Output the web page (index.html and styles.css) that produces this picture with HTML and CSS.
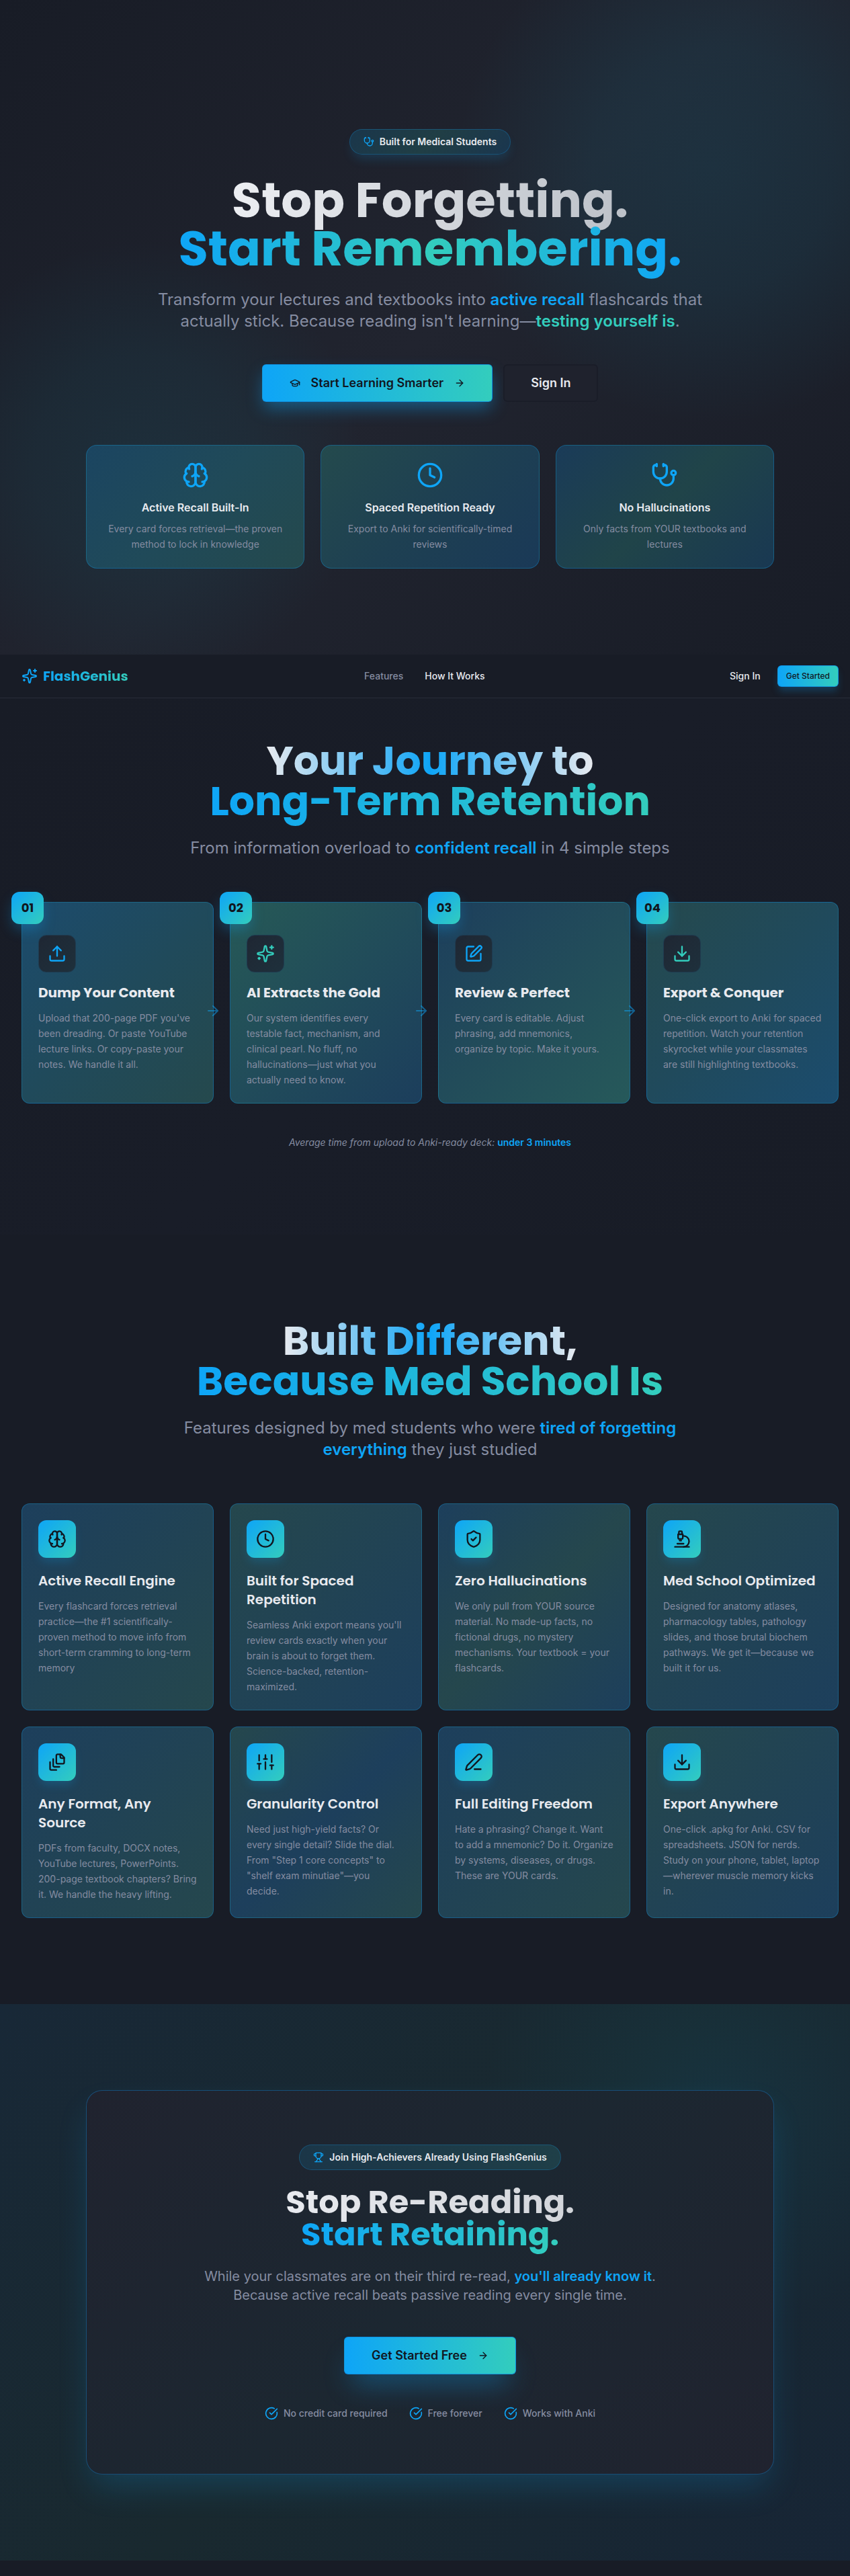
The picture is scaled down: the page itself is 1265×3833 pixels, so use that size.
FILE: index.html
```html
<!DOCTYPE html>
<html lang="en">
<head>
<meta charset="utf-8">
<meta name="viewport" content="width=device-width, initial-scale=1">
<title>FlashGenius</title>
<link rel="stylesheet" href="styles.css">
</head>
<body>
<svg class="sprite" aria-hidden="true">
  <symbol id="stethoscope" viewBox="0 0 24 24"><path d="M11 2v2"/><path d="M5 2v2"/><path d="M5 3H4a2 2 0 0 0-2 2v4a6 6 0 0 0 12 0V5a2 2 0 0 0-2-2h-1"/><path d="M8 15a6 6 0 0 0 12 0v-3"/><circle cx="20" cy="10" r="2"/></symbol>
  <symbol id="graduation" viewBox="0 0 24 24"><path d="M21.42 10.922a1 1 0 0 0-.019-1.838L12.83 5.18a2 2 0 0 0-1.66 0L2.6 9.08a1 1 0 0 0 0 1.832l8.57 3.908a2 2 0 0 0 1.66 0z"/><path d="M22 10v6"/><path d="M6 12.5V16a6 3 0 0 0 12 0v-3.5"/></symbol>
  <symbol id="arrow" viewBox="0 0 24 24"><path d="M5 12h14"/><path d="m12 5 7 7-7 7"/></symbol>
  <symbol id="brain" viewBox="0 0 24 24"><path d="M12 5a3 3 0 1 0-5.997.125 4 4 0 0 0-2.526 5.77 4 4 0 0 0 .556 6.588A4 4 0 1 0 12 18Z"/><path d="M12 5a3 3 0 1 1 5.997.125 4 4 0 0 1 2.526 5.77 4 4 0 0 1-.556 6.588A4 4 0 1 1 12 18Z"/><path d="M15 13a4.5 4.5 0 0 1-3-4 4.5 4.5 0 0 1-3 4"/><path d="M17.599 6.5a3 3 0 0 0 .399-1.375"/><path d="M6.003 5.125A3 3 0 0 0 6.401 6.5"/><path d="M3.477 10.896a4 4 0 0 1 .585-.396"/><path d="M19.938 10.5a4 4 0 0 1 .585.396"/><path d="M6 18a4 4 0 0 1-1.967-.516"/><path d="M19.967 17.484A4 4 0 0 1 18 18"/></symbol>
  <symbol id="clock" viewBox="0 0 24 24"><circle cx="12" cy="12" r="10"/><path d="M12 6v6l4 2"/></symbol>
  <symbol id="sparkles" viewBox="0 0 24 24"><path d="M11.017 2.814a1 1 0 0 1 1.966 0l1.051 5.558a2 2 0 0 0 1.594 1.594l5.558 1.051a1 1 0 0 1 0 1.966l-5.558 1.051a2 2 0 0 0-1.594 1.594l-1.051 5.558a1 1 0 0 1-1.966 0l-1.051-5.558a2 2 0 0 0-1.594-1.594l-5.558-1.051a1 1 0 0 1 0-1.966l5.558-1.051a2 2 0 0 0 1.594-1.594z"/><path d="M20 2v4"/><path d="M22 4h-4"/><path d="M4 17v2"/><path d="M5 18H3"/></symbol>
  <symbol id="upload" viewBox="0 0 24 24"><path d="M12 3v12"/><path d="m17 8-5-5-5 5"/><path d="M21 15v4a2 2 0 0 1-2 2H5a2 2 0 0 1-2-2v-4"/></symbol>
  <symbol id="download" viewBox="0 0 24 24"><path d="M12 15V3"/><path d="M21 15v4a2 2 0 0 1-2 2H5a2 2 0 0 1-2-2v-4"/><path d="m7 10 5 5 5-5"/></symbol>
  <symbol id="edit" viewBox="0 0 24 24"><path d="M12 3H5a2 2 0 0 0-2 2v14a2 2 0 0 0 2 2h14a2 2 0 0 0 2-2v-7"/><path d="M18.375 2.625a1 1 0 0 1 3 3l-9.013 9.014a2 2 0 0 1-.853.505l-2.873.84a.5.5 0 0 1-.62-.62l.84-2.873a2 2 0 0 1 .506-.852z"/></symbol>
  <symbol id="shield" viewBox="0 0 24 24"><path d="M20 13c0 5-3.5 7.5-7.66 8.95a1 1 0 0 1-.67-.01C7.5 20.5 4 18 4 13V6a1 1 0 0 1 1-1c2 0 4.5-1.2 6.24-2.72a1.17 1.17 0 0 1 1.52 0C14.51 3.81 17 5 19 5a1 1 0 0 1 1 1z"/><path d="m9 12 2 2 4-4"/></symbol>
  <symbol id="microscope" viewBox="0 0 24 24"><path d="M6 18h8"/><path d="M3 22h18"/><path d="M14 22a7 7 0 1 0 0-14h-1"/><path d="M9 14h2"/><path d="M9 12a2 2 0 0 1-2-2V6h6v4a2 2 0 0 1-2 2Z"/><path d="M12 6V3a1 1 0 0 0-1-1H9a1 1 0 0 0-1 1v3"/></symbol>
  <symbol id="files" viewBox="0 0 24 24"><path d="M21 7h-3a2 2 0 0 1-2-2V2"/><path d="M21 6v6.5c0 .8-.7 1.5-1.5 1.5h-7c-.8 0-1.5-.7-1.5-1.5v-9c0-.8.7-1.5 1.5-1.5H17Z"/><path d="M7 8v8.8c0 .3.2.6.4.8.2.2.5.4.8.4H15"/><path d="M3 12v8.8c0 .3.2.6.4.8.2.2.5.4.8.4H11"/></symbol>
  <symbol id="sliders" viewBox="0 0 24 24"><path d="M4 21v-7"/><path d="M4 10V3"/><path d="M12 21v-9"/><path d="M12 8V3"/><path d="M20 21v-5"/><path d="M20 12V3"/><path d="M2 14h4"/><path d="M10 8h4"/><path d="M18 16h4"/></symbol>
  <symbol id="pen" viewBox="0 0 24 24"><path d="M13 21h8"/><path d="M21.174 6.812a1 1 0 0 0-3.986-3.987L3.842 16.174a2 2 0 0 0-.5.83l-1.321 4.352a.5.5 0 0 0 .623.622l4.353-1.32a2 2 0 0 0 .83-.497z"/></symbol>
  <symbol id="trophy" viewBox="0 0 24 24"><path d="M6 9H4.5a2.5 2.5 0 0 1 0-5H6"/><path d="M18 9h1.5a2.5 2.5 0 0 0 0-5H18"/><path d="M4 22h16"/><path d="M10 14.66V17c0 .55-.47.98-.97 1.21C7.85 18.75 7 20.24 7 22"/><path d="M14 14.66V17c0 .55.47.98.97 1.21C16.15 18.75 17 20.24 17 22"/><path d="M18 2H6v7a6 6 0 0 0 12 0V2Z"/></symbol>
  <symbol id="check" viewBox="0 0 24 24"><path d="M21.801 10A10 10 0 1 1 17 3.335"/><path d="m9 11 3 3L22 4"/></symbol>
</svg>

<div class="page">
  <section class="hero">
    <p class="pill pill-hero"><svg class="icon"><use href="#stethoscope"/></svg>Built for Medical Students</p>
    <h1 class="display"><span class="fade">Stop Forgetting.</span><br><span class="wave">Start Remembering.</span></h1>
    <p class="lead">Transform your lectures and textbooks into <strong>active recall</strong> flashcards that actually stick. Because reading isn't learning—<strong class="teal">testing yourself is</strong>.</p>
    <div class="actions">
      <button class="btn btn-primary" type="button"><svg class="icon"><use href="#graduation"/></svg>Start Learning Smarter<svg class="icon"><use href="#arrow"/></svg></button>
      <button class="btn btn-quiet" type="button">Sign In</button>
    </div>
    <ul class="perks">
      <li class="perk tint-a"><svg class="icon icon-xl"><use href="#brain"/></svg><h3>Active Recall Built-In</h3><p>Every card forces retrieval—the proven method to lock in knowledge</p></li>
      <li class="perk tint-b"><svg class="icon icon-xl"><use href="#clock"/></svg><h3>Spaced Repetition Ready</h3><p>Export to Anki for scientifically-timed reviews</p></li>
      <li class="perk tint-c"><svg class="icon icon-xl"><use href="#stethoscope"/></svg><h3>No Hallucinations</h3><p>Only facts from YOUR textbooks and lectures</p></li>
    </ul>
  </section>

  <header class="nav">
    <a class="brand" href="#"><svg class="icon icon-md"><use href="#sparkles"/></svg><span>FlashGenius</span></a>
    <nav class="links"><a class="dim" href="#features">Features</a><a href="#how">How It Works</a></nav>
    <div class="account"><button class="btn-text" type="button">Sign In</button><button class="btn-small" type="button">Get Started</button></div>
  </header>

  <section class="how" id="how">
    <h2 class="title"><span class="shine">Your Journey to</span><br><span class="flow">Long-Term Retention</span></h2>
    <p class="lead">From information overload to <strong>confident recall</strong> in 4 simple steps</p>
    <ol class="grid steps">
      <li class="card step step-a"><span class="number">01</span><span class="tile"><svg class="icon icon-lg"><use href="#upload"/></svg></span><h3>Dump Your Content</h3><p>Upload that 200-page PDF you've been dreading. Or paste YouTube lecture links. Or copy-paste your notes. We handle it all.</p><svg class="icon next"><use href="#arrow"/></svg></li>
      <li class="card step step-b"><span class="number">02</span><span class="tile tile-teal"><svg class="icon icon-lg"><use href="#sparkles"/></svg></span><h3>AI Extracts the Gold</h3><p>Our system identifies every testable fact, mechanism, and clinical pearl. No fluff, no hallucinations—just what you actually need to know.</p><svg class="icon next"><use href="#arrow"/></svg></li>
      <li class="card step step-c"><span class="number">03</span><span class="tile"><svg class="icon icon-lg"><use href="#edit"/></svg></span><h3>Review &amp; Perfect</h3><p>Every card is editable. Adjust phrasing, add mnemonics, organize by topic. Make it yours.</p><svg class="icon next"><use href="#arrow"/></svg></li>
      <li class="card step step-d"><span class="number">04</span><span class="tile tile-teal"><svg class="icon icon-lg"><use href="#download"/></svg></span><h3>Export &amp; Conquer</h3><p>One-click export to Anki for spaced repetition. Watch your retention skyrocket while your classmates are still highlighting textbooks.</p></li>
    </ol>
    <p class="note">Average time from upload to Anki-ready deck: <strong>under 3 minutes</strong></p>
  </section>

  <section class="features" id="features">
    <h2 class="title"><span class="shine">Built Different,</span><br><span class="flow">Because Med School Is</span></h2>
    <p class="lead lead-narrow">Features designed by med students who were <strong>tired of forgetting everything</strong> they just studied</p>
    <ul class="grid">
      <li class="card feature blue-teal"><span class="badge"><svg class="icon icon-lg"><use href="#brain"/></svg></span><h3>Active Recall Engine</h3><p>Every flashcard forces retrieval practice—the #1 scientifically-proven method to move info from short-term cramming to long-term memory</p></li>
      <li class="card feature teal-blue"><span class="badge"><svg class="icon icon-lg"><use href="#clock"/></svg></span><h3>Built for Spaced Repetition</h3><p>Seamless Anki export means you'll review cards exactly when your brain is about to forget them. Science-backed, retention-maximized.</p></li>
      <li class="card feature blue-teal-blue"><span class="badge"><svg class="icon icon-lg"><use href="#shield"/></svg></span><h3>Zero Hallucinations</h3><p>We only pull from YOUR source material. No made-up facts, no fictional drugs, no mystery mechanisms. Your textbook = your flashcards.</p></li>
      <li class="card feature teal-blue"><span class="badge"><svg class="icon icon-lg"><use href="#microscope"/></svg></span><h3>Med School Optimized</h3><p>Designed for anatomy atlases, pharmacology tables, pathology slides, and those brutal biochem pathways. We get it—because we built it for us.</p></li>
      <li class="card feature blue-teal"><span class="badge"><svg class="icon icon-lg"><use href="#files"/></svg></span><h3>Any Format, Any Source</h3><p>PDFs from faculty, DOCX notes, YouTube lectures, PowerPoints. 200-page textbook chapters? Bring it. We handle the heavy lifting.</p></li>
      <li class="card feature teal-blue-teal"><span class="badge"><svg class="icon icon-lg"><use href="#sliders"/></svg></span><h3>Granularity Control</h3><p>Need just high-yield facts? Or every single detail? Slide the dial. From "Step 1 core concepts" to "shelf exam minutiae"—you decide.</p></li>
      <li class="card feature blue-teal"><span class="badge"><svg class="icon icon-lg"><use href="#pen"/></svg></span><h3>Full Editing Freedom</h3><p>Hate a phrasing? Change it. Want to add a mnemonic? Do it. Organize by systems, diseases, or drugs. These are YOUR cards.</p></li>
      <li class="card feature teal-blue"><span class="badge"><svg class="icon icon-lg"><use href="#download"/></svg></span><h3>Export Anywhere</h3><p>One-click .apkg for Anki. CSV for spreadsheets. JSON for nerds. Study on your phone, tablet, laptop—wherever muscle memory kicks in.</p></li>
    </ul>
  </section>

  <section class="cta">
    <div class="panel">
      <p class="pill"><svg class="icon"><use href="#trophy"/></svg>Join High-Achievers Already Using FlashGenius</p>
      <h2 class="subtitle"><span class="fade-soft">Stop Re-Reading.</span><br><span class="flow">Start Retaining.</span></h2>
      <p class="pitch">While your classmates are on their third re-read, <strong>you'll already know it</strong>. Because active recall beats passive reading every single time.</p>
      <button class="btn btn-primary btn-glow" type="button">Get Started Free<svg class="icon"><use href="#arrow"/></svg></button>
      <ul class="checks">
        <li><svg class="icon icon-sm"><use href="#check"/></svg>No credit card required</li>
        <li><svg class="icon icon-sm"><use href="#check"/></svg>Free forever</li>
        <li><svg class="icon icon-sm"><use href="#check"/></svg>Works with Anki</li>
      </ul>
    </div>
  </section>
</div>
</body>
</html>
```
FILE: styles.css
```css
:root {
  --bg: #181c26;
  --fg: #e8eaef;
  --muted: #858ca1;
  --blue: #0ea5f7;
  --teal: #33cdbd;
  --ink: #11161f;
  --line: rgba(14, 165, 247, 0.3);
}

* { box-sizing: border-box; }

html { overflow-x: hidden; background: var(--bg); }

body {
  margin: 0;
  overflow-x: hidden;
  background: var(--bg);
  color: var(--fg);
  font-family: Inter, "Noto Sans", sans-serif;
  font-size: 14px;
  line-height: 20px;
}

h1, h2, h3, p, ul, ol { margin: 0; padding: 0; }
ul, ol { list-style: none; }
a { color: inherit; text-decoration: none; }
button { font: inherit; color: inherit; background: none; border: 0; padding: 0; cursor: pointer; }
strong { font-weight: 600; color: var(--blue); }
strong.teal { color: var(--teal); }

.sprite { display: none; }

.icon {
  width: 16px;
  height: 16px;
  flex: none;
  fill: none;
  stroke: currentColor;
  stroke-width: 2;
  stroke-linecap: round;
  stroke-linejoin: round;
}
.icon-sm { width: 20px; height: 20px; }
.icon-md { width: 24px; height: 24px; }
.icon-lg { width: 28px; height: 28px; }
.icon-xl { width: 40px; height: 40px; }

.page { min-width: 1280px; }

/* Hero */
.hero {
  display: flex;
  flex-direction: column;
  align-items: center;
  padding: 192px 128px 128px;
  text-align: center;
  background:
    radial-gradient(circle at 1060px 250px, rgba(20, 120, 150, 0.17) 0, rgba(20, 120, 150, 0.13) 180px, rgba(20, 120, 150, 0) 380px),
    radial-gradient(circle at 210px 690px, rgba(20, 120, 140, 0.14) 0, rgba(20, 120, 140, 0.1) 160px, rgba(20, 120, 140, 0) 330px),
    linear-gradient(135deg, #181c26, #21242f 50%, #181c26);
}

.pill {
  display: flex;
  align-items: center;
  gap: 8px;
  padding: 8px 20px;
  border: 1px solid rgba(14, 165, 247, 0.25);
  border-radius: 19px;
  font-weight: 600;
  background: linear-gradient(90deg, #1b3648, #1f3f48);
}
.pill .icon { color: var(--blue); }
.pill-hero {
  background: linear-gradient(135deg, #1a364b, #203e45 50%, #1a364f);
  box-shadow: 0 10px 16px -4px rgba(14, 165, 247, 0.18);
}

.display, .title, .subtitle, .brand, .number, .card h3 { font-family: Poppins, Inter, sans-serif; }
.display { margin-top: 32px; font-size: 72px; line-height: 72px; font-weight: 700; }
.title { font-size: 60px; line-height: 60px; font-weight: 700; }
.subtitle { margin-top: 24px; font-size: 48px; line-height: 48px; font-weight: 700; }

.fade, .fade-soft, .wave, .shine, .flow, .brand span {
  color: transparent;
  -webkit-background-clip: text;
  background-clip: text;
}
.fade { background-image: linear-gradient(90deg, #eceef2, #bcc1c8); }
.fade-soft { background-image: linear-gradient(90deg, #e8eaef, #d2d5da); }
.wave { background-image: linear-gradient(90deg, var(--blue), var(--teal) 50%, var(--blue)); }
.shine { background-image: linear-gradient(90deg, var(--fg), var(--blue) 50%, var(--fg)); }
.flow, .brand span { background-image: linear-gradient(90deg, var(--blue), var(--teal)); }

.lead {
  max-width: 832px;
  margin-top: 24px;
  color: var(--muted);
  font-size: 24px;
  line-height: 32px;
}
.lead-narrow { max-width: 768px; }

.actions { display: flex; gap: 16px; margin-top: 48px; }
.btn {
  display: flex;
  align-items: center;
  gap: 16px;
  height: 56px;
  padding: 0 40px;
  border: 1px solid transparent;
  border-radius: 6px;
  font-size: 18px;
  line-height: 28px;
  font-weight: 600;
}
.btn-primary {
  border-color: rgba(14, 140, 225, 0.8);
  color: var(--ink);
  background: linear-gradient(90deg, var(--blue), var(--teal));
  box-shadow: 0 12px 24px -2px rgba(14, 165, 247, 0.4);
}
.btn-glow { margin-top: 48px; box-shadow: 0 24px 40px -12px rgba(14, 165, 247, 0.4); }
.btn-quiet { border: 2px solid #1a1d28; padding: 0 39px; background: #1f222d; }

.perks {
  display: grid;
  grid-template-columns: repeat(3, 1fr);
  gap: 24px;
  width: 100%;
  margin-top: 64px;
}
.perk {
  display: flex;
  flex-direction: column;
  align-items: center;
  padding: 24px;
  border: 1px solid var(--line);
  border-radius: 16px;
}
.perk .icon { color: var(--blue); }
.perk h3 { margin-top: 16px; font-size: 16px; line-height: 24px; font-weight: 600; }
.perk p { margin-top: 8px; color: var(--muted); line-height: 23px; }
.tint-a { background: linear-gradient(135deg, #1b4561, #204a59 50%, #24494d); }
.tint-b { background: linear-gradient(135deg, #244a4d, #1e4052 50%, #1a3957); }
.tint-c { background: linear-gradient(135deg, #1a3b58, #204449 50%, #193852); }

/* Navigation bar */
.nav {
  display: flex;
  align-items: center;
  justify-content: space-between;
  height: 65px;
  padding: 0 32px;
  border-bottom: 1px solid #272c38;
  background: var(--bg);
  font-weight: 500;
}
.brand { display: flex; align-items: center; gap: 8px; font-size: 20px; line-height: 28px; font-weight: 700; }
.brand .icon { color: var(--blue); }
.links { display: flex; gap: 32px; }
.links .dim { color: var(--muted); }
.account { display: flex; align-items: center; gap: 12px; }
.btn-text { padding: 0 13px; font-weight: 500; }
.btn-small {
  height: 32px;
  padding: 0 12px;
  border: 1px solid rgba(14, 140, 225, 0.8);
  border-radius: 6px;
  color: var(--ink);
  font-size: 12px;
  font-weight: 500;
  background: linear-gradient(90deg, var(--blue), var(--teal));
  box-shadow: 0 8px 12px -2px rgba(14, 165, 247, 0.25);
}

/* Shared section layout */
.how, .features {
  display: flex;
  flex-direction: column;
  align-items: center;
  text-align: center;
}
.how { padding: 63px 32px 127px; background: linear-gradient(135deg, #181c26, #191d28 50%, #181c26); }
.features { padding: 128px 32px; }

.grid {
  display: grid;
  grid-template-columns: repeat(4, 1fr);
  gap: 24px;
  width: 100%;
  margin-top: 64px;
  text-align: left;
}
.card {
  position: relative;
  padding: 24px 24px 23px;
  border: 1px solid var(--line);
  border-radius: 12px;
}
.card h3 { font-size: 20px; line-height: 28px; }
.card p { margin-top: 12px; color: var(--muted); line-height: 23px; }

/* Steps */
.step { padding-top: 48px; }
.step h3 { margin-top: 16px; font-weight: 700; }
.step-a { background: linear-gradient(135deg, #1c4b6c, #204a5b 50%, #25494d); }
.step-b { background: linear-gradient(135deg, #265956, #214c5a 50%, #1c3e5c); }
.step-c { background: linear-gradient(135deg, #1d3f5c, #224c5a 50%, #26595a); }
.step-d { background: linear-gradient(135deg, #25494d, #204a5c 50%, #1b4c6e); }
.number {
  position: absolute;
  top: -16px;
  left: -16px;
  display: grid;
  place-items: center;
  width: 48px;
  height: 48px;
  border-radius: 12px;
  color: var(--ink);
  font-size: 18px;
  font-weight: 700;
  background: linear-gradient(135deg, var(--blue), var(--teal));
  box-shadow: 0 10px 20px -2px rgba(14, 165, 247, 0.3);
}
.tile {
  display: grid;
  place-items: center;
  width: 56px;
  height: 56px;
  border: 1px solid #1f3b50;
  border-radius: 12px;
  color: var(--blue);
  background: linear-gradient(135deg, #1f2733, #1e303c);
}
.tile-teal { color: var(--teal); }
.next {
  position: absolute;
  top: 50%;
  right: -12px;
  width: 24px;
  height: 24px;
  color: var(--blue);
  opacity: 0.5;
}
.note { margin-top: 48px; color: var(--muted); font-style: italic; }
.note strong { font-style: normal; }

/* Features */
.feature h3 { margin-top: 20px; font-weight: 600; }
.badge {
  display: grid;
  place-items: center;
  width: 56px;
  height: 56px;
  border-radius: 12px;
  color: var(--ink);
  background: linear-gradient(135deg, var(--blue), var(--teal));
  box-shadow: 0 8px 14px -2px rgba(14, 165, 247, 0.2);
}
.blue-teal { background: linear-gradient(135deg, #1d3f5c, #25474d); }
.teal-blue { background: linear-gradient(135deg, #25474d, #1d3f5c); }
.blue-teal-blue { background: linear-gradient(135deg, #1d3f5c, #25474d 50%, #1d3f5c); }
.teal-blue-teal { background: linear-gradient(135deg, #25474d, #1d3f5c 50%, #25474d); }

/* Call to action */
.cta {
  padding: 128px;
  background:
    radial-gradient(circle at 1060px 150px, rgba(14, 120, 160, 0.13), rgba(14, 120, 160, 0) 340px),
    linear-gradient(135deg, #182837, #18292f 25%, #172635 50%, #18282f 75%, #172536);
}
.panel {
  display: flex;
  flex-direction: column;
  align-items: center;
  padding: 80px;
  border: 1px solid rgba(14, 140, 225, 0.4);
  border-radius: 24px;
  text-align: center;
  background: linear-gradient(135deg, #20232f, #1c2731 50%, #20232f);
  box-shadow: 0 25px 50px -8px rgba(14, 165, 247, 0.2);
}
.cta {
  background:
    radial-gradient(circle at 1060px 150px, rgba(14, 120, 160, 0.13), rgba(14, 120, 160, 0) 340px),
    linear-gradient(135deg, #182837, #19292f 50%, #172536);
}
.pitch { max-width: 704px; margin-top: 24px; color: var(--muted); font-size: 20px; line-height: 28px; }
.checks { display: flex; gap: 32px; margin-top: 48px; color: var(--muted); font-weight: 500; }
.checks li { display: flex; align-items: center; gap: 8px; }
.checks .icon { color: var(--blue); }
```
